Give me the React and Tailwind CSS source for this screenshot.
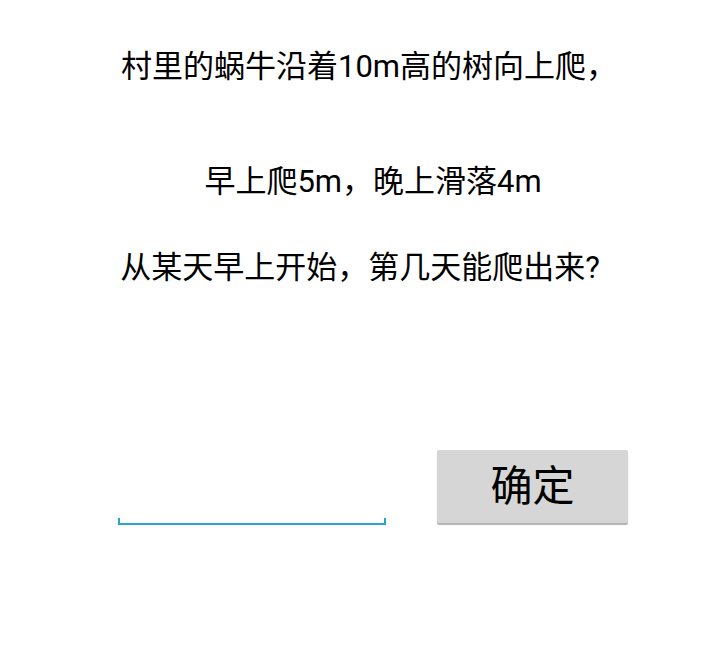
import React, { useState } from "react";

export default function App() {
  const [answer, setAnswer] = useState("");

  return (
    <div
      className="w-[720px] h-[656px] bg-white text-black flex flex-col items-center"
      style={{ fontFamily: 'Roboto, "Noto Sans CJK SC", sans-serif' }}
    >
      <p className="mt-[49px] pl-[18px] text-[31px] leading-[36px] text-center whitespace-nowrap">
        村里的蜗牛沿着10m高的树向上爬，
      </p>
      <p className="mt-[79px] pl-[26px] text-[31px] leading-[36px] text-center whitespace-nowrap">
        早上爬5m，晚上滑落4m
      </p>
      <p className="mt-[50px] text-[31px] leading-[36px] text-center whitespace-nowrap">
        从某天早上开始，第几天能爬出来?
      </p>

      <div className="mt-[164px] w-full flex items-start pl-[118px]">
        {/* 输入框 */}
        <div className="relative mt-[35px] w-[268px] h-[40px]">
          <input
            type="text"
            value={answer}
            onChange={(e) => setAnswer(e.target.value)}
            className="w-full h-full bg-transparent outline-none text-[26px] px-2"
          />
          <div className="absolute left-0 right-0 bottom-0 h-[2px] bg-[#2aa4c9]" />
          <div className="absolute left-0 bottom-0 w-[2px] h-[7px] bg-[#2aa4c9]" />
          <div className="absolute right-0 bottom-0 w-[2px] h-[7px] bg-[#2aa4c9]" />
        </div>

        <button
          type="button"
          className="ml-[51px] w-[191px] h-[73px] bg-[#d6d6d6] rounded-[2px] shadow-[0_2px_1px_rgba(0,0,0,0.3)] text-[42px] leading-none"
        >
          确定
        </button>
      </div>
    </div>
  );
}
